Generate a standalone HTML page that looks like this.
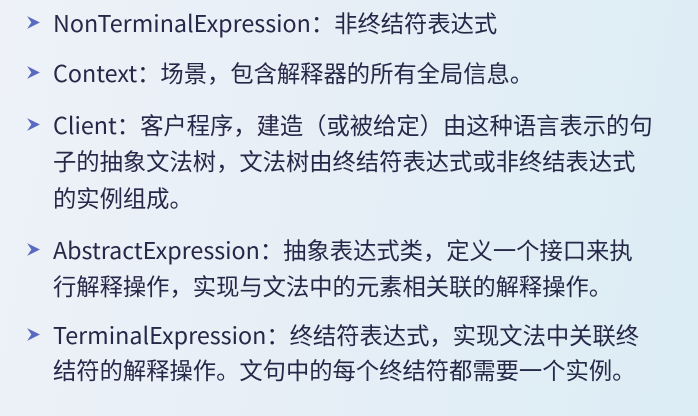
<!DOCTYPE html>
<html><head><meta charset="utf-8"><style>
html,body{margin:0;padding:0}
body{width:698px;height:416px;overflow:hidden;position:relative;
background:linear-gradient(100deg,#eef2f8 0%,#e6eef6 50%,#dcedf5 100%);
font-family:"Noto Sans CJK SC",sans-serif;color:#262848}
.l{position:absolute;left:53px;height:32px;line-height:32px;white-space:nowrap;font-size:23.3px}
.l b{font-weight:normal;font-size:23.3px}
.a{position:absolute;left:26px;width:15px;height:15px}
</style></head><body>
<svg class="a" style="top:15px" viewBox="0 0 14 14"><path d="M1 1 L13 7 L1 13 L5 7 Z" fill="#5a6ac0"/></svg>
<div class="l" style="top:6px"><b>NonTerminalExpression</b>：非终结符表达式</div>
<svg class="a" style="top:65px" viewBox="0 0 14 14"><path d="M1 1 L13 7 L1 13 L5 7 Z" fill="#5a6ac0"/></svg>
<div class="l" style="top:56px"><b>Context</b>：场景，包含解释器的所有全局信息。</div>
<svg class="a" style="top:117px" viewBox="0 0 14 14"><path d="M1 1 L13 7 L1 13 L5 7 Z" fill="#5a6ac0"/></svg>
<div class="l" style="top:108px"><b>Client</b>：客户程序，建造（或被给定）由这种语言表示的句</div>
<div class="l" style="top:144px">子的抽象文法树，文法树由终结符表达式或非终结表达式</div>
<div class="l" style="top:181px">的实例组成。</div>
<svg class="a" style="top:242px" viewBox="0 0 14 14"><path d="M1 1 L13 7 L1 13 L5 7 Z" fill="#5a6ac0"/></svg>
<div class="l" style="top:233px"><b>AbstractExpression</b>：抽象表达式类，定义一个接口来执</div>
<div class="l" style="top:269px">行解释操作，实现与文法中的元素相关联的解释操作。</div>
<svg class="a" style="top:327px" viewBox="0 0 14 14"><path d="M1 1 L13 7 L1 13 L5 7 Z" fill="#5a6ac0"/></svg>
<div class="l" style="top:318px"><b>TerminalExpression</b>：终结符表达式，实现文法中关联终</div>
<div class="l" style="top:353px">结符的解释操作。文句中的每个终结符都需要一个实例。</div>
</body></html>
